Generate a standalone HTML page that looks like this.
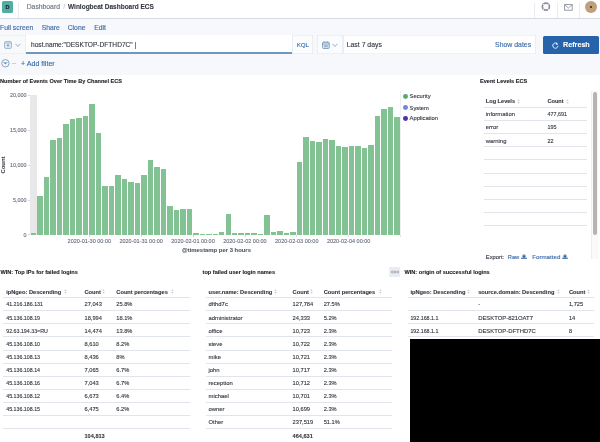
<!DOCTYPE html>
<html><head><meta charset="utf-8"><style>
html,body{margin:0;padding:0;}
body{width:600px;height:442px;position:relative;overflow:hidden;background:#fff;font-family:"Liberation Sans",sans-serif;}
.t{position:absolute;white-space:nowrap;line-height:1;}
.r{position:absolute;}
#w{position:absolute;left:0;top:0;width:600px;height:442px;will-change:transform;background:#fff;}
svg{display:block;}
</style></head><body><div id="w">
<div class="r" style="left:0.00px;top:17.60px;width:600.00px;height:0.90px;background:#d3dae6;"></div>
<div class="r" style="left:2.00px;top:1.10px;width:11.10px;height:11.60px;background:#50afa3;border-radius:1.5px;"></div>
<div class="t" style="left:5.40px;top:5px;font-size:5.6px;font-weight:700;color:#1a1c21;-webkit-text-stroke:0.1px currentColor;">D</div>
<div class="r" style="left:18.20px;top:2.80px;width:0.70px;height:14.80px;background:#e6e9ee;"></div>
<div class="t" style="left:26.70px;top:4px;font-size:6.8px;font-weight:400;color:#69707d;-webkit-text-stroke:0.12px currentColor;">Dashboard</div>
<div class="t" style="left:63.20px;top:4px;font-size:6.8px;font-weight:400;color:#c5c9d0;-webkit-text-stroke:0.12px currentColor;">/</div>
<div class="t" style="left:68.00px;top:4px;font-size:6.5px;font-weight:700;color:#343741;-webkit-text-stroke:0.1px currentColor;">Winlogbeat Dashboard ECS</div>
<div class="r" style="left:534.05px;top:2.80px;width:0.70px;height:14.80px;background:#e9ecf0;"></div>
<div class="r" style="left:557.35px;top:2.80px;width:0.70px;height:14.80px;background:#e9ecf0;"></div>
<div class="r" style="left:579.25px;top:2.80px;width:0.70px;height:14.80px;background:#e9ecf0;"></div>
<div class="r" style="left:0.00px;top:18.50px;width:600.00px;height:56.50px;background:#f6f8fb;"></div>
<div class="t" style="left:0.00px;top:25px;font-size:6.8px;font-weight:400;color:#3a69a8;-webkit-text-stroke:0.12px currentColor;">Full screen</div>
<div class="t" style="left:41.70px;top:25px;font-size:6.8px;font-weight:400;color:#3a69a8;-webkit-text-stroke:0.12px currentColor;">Share</div>
<div class="t" style="left:67.70px;top:25px;font-size:6.8px;font-weight:400;color:#3a69a8;-webkit-text-stroke:0.12px currentColor;">Clone</div>
<div class="t" style="left:94.30px;top:25px;font-size:6.8px;font-weight:400;color:#3a69a8;-webkit-text-stroke:0.12px currentColor;">Edit</div>
<div class="r" style="left:0.00px;top:35.20px;width:25.60px;height:18.50px;background:#f7f9fb;box-shadow:inset 0 0.6px 0 #e3e7ed, inset 0 -0.6px 0 #e3e7ed, inset -0.6px 0 0 #e3e7ed;"></div>
<div class="r" style="left:25.60px;top:35.40px;width:266.20px;height:18.30px;background:#fff;"></div>
<div class="r" style="left:25.60px;top:52.10px;width:266.20px;height:1.70px;background:#7097c4;"></div>
<div class="t" style="left:31.00px;top:42px;font-size:6.6px;font-weight:400;color:#343741;-webkit-text-stroke:0.12px currentColor;">host.name:&quot;DESKTOP-DFTHD7C&quot; |</div>
<div class="r" style="left:291.80px;top:35.40px;width:21.50px;height:18.30px;background:#fbfcfd;box-shadow:inset 0 0 0 0.6px #dfe5ef;"></div>
<div class="t" style="left:296.70px;top:42px;font-size:6.1px;font-weight:400;color:#3a69a8;-webkit-text-stroke:0.12px currentColor;">KQL</div>
<div class="r" style="left:317.00px;top:35.40px;width:25.60px;height:18.30px;background:#fbfcfd;box-shadow:inset 0 0 0 0.6px #dfe5ef;"></div>
<div class="r" style="left:342.60px;top:35.40px;width:193.00px;height:18.30px;background:#fff;box-shadow:inset 0 0 0 0.6px #dfe5ef;"></div>
<div class="t" style="left:346.70px;top:42px;font-size:6.9px;font-weight:400;color:#343741;-webkit-text-stroke:0.12px currentColor;">Last 7 days</div>
<div class="t" style="left:495.10px;top:42px;font-size:6.9px;font-weight:400;color:#3a69a8;-webkit-text-stroke:0.12px currentColor;">Show dates</div>
<div class="r" style="left:543.20px;top:35.50px;width:55.40px;height:18.10px;background:#2763ab;border-radius:1.5px;"></div>
<div class="t" style="left:563.00px;top:41px;font-size:7.2px;font-weight:700;color:#fff;-webkit-text-stroke:0.1px currentColor;">Refresh</div>
<div class="t" style="left:21.00px;top:61px;font-size:7.1px;font-weight:400;color:#3a69a8;-webkit-text-stroke:0.12px currentColor;">+ Add filter</div>
<div class="t" style="left:0.00px;top:79px;font-size:5.6px;font-weight:700;color:#1a1c21;-webkit-text-stroke:0.1px currentColor;">Number of Events Over Time By Channel ECS</div>
<div class="t" style="right:573.40px;top:93px;font-size:5.4px;font-weight:400;color:#69707d;-webkit-text-stroke:0.12px currentColor;">20,000</div>
<div class="r" style="left:28.30px;top:95.00px;width:1.50px;height:0.60px;background:#d3dae6;"></div>
<div class="t" style="right:573.40px;top:128px;font-size:5.4px;font-weight:400;color:#69707d;-webkit-text-stroke:0.12px currentColor;">15,000</div>
<div class="r" style="left:28.30px;top:129.90px;width:1.50px;height:0.60px;background:#d3dae6;"></div>
<div class="t" style="right:573.40px;top:163px;font-size:5.4px;font-weight:400;color:#69707d;-webkit-text-stroke:0.12px currentColor;">10,000</div>
<div class="r" style="left:28.30px;top:164.70px;width:1.50px;height:0.60px;background:#d3dae6;"></div>
<div class="t" style="right:573.40px;top:198px;font-size:5.4px;font-weight:400;color:#69707d;-webkit-text-stroke:0.12px currentColor;">5,000</div>
<div class="r" style="left:28.30px;top:199.60px;width:1.50px;height:0.60px;background:#d3dae6;"></div>
<div class="t" style="right:573.40px;top:233px;font-size:5.4px;font-weight:400;color:#69707d;-webkit-text-stroke:0.12px currentColor;">0</div>
<div class="r" style="left:28.30px;top:234.40px;width:1.50px;height:0.60px;background:#d3dae6;"></div>
<div class="r" style="left:30.00px;top:95.30px;width:7.00px;height:139.40px;background:#e8e8e8;"></div>
<div class="r" style="left:31.00px;top:232.90px;width:5.45px;height:1.80px;background:#82c293;"></div>
<div class="r" style="left:37.48px;top:195.90px;width:5.45px;height:38.80px;background:#82c293;"></div>
<div class="r" style="left:43.97px;top:176.90px;width:5.45px;height:57.80px;background:#82c293;"></div>
<div class="r" style="left:50.45px;top:139.70px;width:5.45px;height:95.00px;background:#82c293;"></div>
<div class="r" style="left:56.94px;top:138.00px;width:5.45px;height:96.70px;background:#82c293;"></div>
<div class="r" style="left:63.42px;top:124.30px;width:5.45px;height:110.40px;background:#82c293;"></div>
<div class="r" style="left:69.90px;top:119.00px;width:5.45px;height:115.70px;background:#82c293;"></div>
<div class="r" style="left:76.39px;top:118.00px;width:5.45px;height:116.70px;background:#82c293;"></div>
<div class="r" style="left:82.87px;top:115.50px;width:5.45px;height:119.20px;background:#82c293;"></div>
<div class="r" style="left:89.36px;top:103.90px;width:5.45px;height:130.80px;background:#82c293;"></div>
<div class="r" style="left:95.84px;top:132.80px;width:5.45px;height:101.90px;background:#82c293;"></div>
<div class="r" style="left:102.32px;top:186.20px;width:5.45px;height:48.50px;background:#82c293;"></div>
<div class="r" style="left:108.81px;top:186.20px;width:5.45px;height:48.50px;background:#82c293;"></div>
<div class="r" style="left:115.29px;top:174.70px;width:5.45px;height:60.00px;background:#82c293;"></div>
<div class="r" style="left:121.78px;top:179.10px;width:5.45px;height:55.60px;background:#82c293;"></div>
<div class="r" style="left:128.26px;top:182.00px;width:5.45px;height:52.70px;background:#82c293;"></div>
<div class="r" style="left:134.74px;top:182.80px;width:5.45px;height:51.90px;background:#82c293;"></div>
<div class="r" style="left:141.23px;top:174.80px;width:5.45px;height:59.90px;background:#82c293;"></div>
<div class="r" style="left:147.71px;top:159.60px;width:5.45px;height:75.10px;background:#82c293;"></div>
<div class="r" style="left:154.20px;top:166.70px;width:5.45px;height:68.00px;background:#82c293;"></div>
<div class="r" style="left:160.68px;top:168.70px;width:5.45px;height:66.00px;background:#82c293;"></div>
<div class="r" style="left:167.16px;top:205.90px;width:5.45px;height:28.80px;background:#82c293;"></div>
<div class="r" style="left:173.65px;top:210.00px;width:5.45px;height:24.70px;background:#82c293;"></div>
<div class="r" style="left:180.13px;top:208.80px;width:5.45px;height:25.90px;background:#82c293;"></div>
<div class="r" style="left:186.62px;top:209.10px;width:5.45px;height:25.60px;background:#82c293;"></div>
<div class="r" style="left:193.10px;top:232.90px;width:5.45px;height:1.80px;background:#82c293;"></div>
<div class="r" style="left:199.58px;top:233.90px;width:5.45px;height:0.80px;background:#82c293;"></div>
<div class="r" style="left:206.07px;top:233.90px;width:5.45px;height:0.80px;background:#82c293;"></div>
<div class="r" style="left:212.55px;top:233.80px;width:5.45px;height:0.90px;background:#82c293;"></div>
<div class="r" style="left:219.04px;top:231.70px;width:5.45px;height:3.00px;background:#82c293;"></div>
<div class="r" style="left:225.52px;top:213.70px;width:5.45px;height:21.00px;background:#82c293;"></div>
<div class="r" style="left:232.00px;top:232.90px;width:5.45px;height:1.80px;background:#82c293;"></div>
<div class="r" style="left:238.49px;top:232.90px;width:5.45px;height:1.80px;background:#82c293;"></div>
<div class="r" style="left:244.97px;top:232.60px;width:5.45px;height:2.10px;background:#82c293;"></div>
<div class="r" style="left:251.46px;top:232.60px;width:5.45px;height:2.10px;background:#82c293;"></div>
<div class="r" style="left:257.94px;top:233.80px;width:5.45px;height:0.90px;background:#82c293;"></div>
<div class="r" style="left:264.42px;top:214.70px;width:5.45px;height:20.00px;background:#82c293;"></div>
<div class="r" style="left:270.91px;top:231.90px;width:5.45px;height:2.80px;background:#82c293;"></div>
<div class="r" style="left:277.39px;top:230.50px;width:5.45px;height:4.20px;background:#82c293;"></div>
<div class="r" style="left:283.88px;top:232.60px;width:5.45px;height:2.10px;background:#82c293;"></div>
<div class="r" style="left:290.36px;top:231.60px;width:5.45px;height:3.10px;background:#82c293;"></div>
<div class="r" style="left:296.84px;top:161.60px;width:5.45px;height:73.10px;background:#82c293;"></div>
<div class="r" style="left:303.33px;top:137.00px;width:5.45px;height:97.70px;background:#82c293;"></div>
<div class="r" style="left:309.81px;top:140.90px;width:5.45px;height:93.80px;background:#82c293;"></div>
<div class="r" style="left:316.30px;top:141.80px;width:5.45px;height:92.90px;background:#82c293;"></div>
<div class="r" style="left:322.78px;top:139.60px;width:5.45px;height:95.10px;background:#82c293;"></div>
<div class="r" style="left:322.78px;top:138.80px;width:5.45px;height:1.00px;background:#8fa6c8;"></div>
<div class="r" style="left:329.26px;top:140.30px;width:5.45px;height:94.40px;background:#82c293;"></div>
<div class="r" style="left:335.75px;top:146.20px;width:5.45px;height:88.50px;background:#82c293;"></div>
<div class="r" style="left:342.23px;top:147.00px;width:5.45px;height:87.70px;background:#82c293;"></div>
<div class="r" style="left:348.72px;top:146.00px;width:5.45px;height:88.70px;background:#82c293;"></div>
<div class="r" style="left:355.20px;top:146.00px;width:5.45px;height:88.70px;background:#82c293;"></div>
<div class="r" style="left:361.68px;top:147.90px;width:5.45px;height:86.80px;background:#82c293;"></div>
<div class="r" style="left:368.17px;top:145.30px;width:5.45px;height:89.40px;background:#82c293;"></div>
<div class="r" style="left:374.65px;top:115.80px;width:5.45px;height:118.90px;background:#82c293;"></div>
<div class="r" style="left:381.14px;top:109.00px;width:5.45px;height:125.70px;background:#82c293;"></div>
<div class="r" style="left:387.62px;top:106.60px;width:5.45px;height:128.10px;background:#82c293;"></div>
<div class="r" style="left:394.10px;top:116.70px;width:5.45px;height:118.00px;background:#82c293;"></div>
<div class="r" style="left:89.00px;top:234.80px;width:0.60px;height:2.70px;background:#d3dae6;"></div>
<div class="t" style="left:89.30px;transform:translateX(-50%);top:239px;font-size:5.5px;font-weight:400;color:#69707d;-webkit-text-stroke:0.12px currentColor;">2020-01-30 00:00</div>
<div class="r" style="left:140.87px;top:234.80px;width:0.60px;height:2.70px;background:#d3dae6;"></div>
<div class="t" style="left:141.17px;transform:translateX(-50%);top:239px;font-size:5.5px;font-weight:400;color:#69707d;-webkit-text-stroke:0.12px currentColor;">2020-01-31 00:00</div>
<div class="r" style="left:192.74px;top:234.80px;width:0.60px;height:2.70px;background:#d3dae6;"></div>
<div class="t" style="left:193.04px;transform:translateX(-50%);top:239px;font-size:5.5px;font-weight:400;color:#69707d;-webkit-text-stroke:0.12px currentColor;">2020-02-01 00:00</div>
<div class="r" style="left:244.61px;top:234.80px;width:0.60px;height:2.70px;background:#d3dae6;"></div>
<div class="t" style="left:244.91px;transform:translateX(-50%);top:239px;font-size:5.5px;font-weight:400;color:#69707d;-webkit-text-stroke:0.12px currentColor;">2020-02-02 00:00</div>
<div class="r" style="left:296.48px;top:234.80px;width:0.60px;height:2.70px;background:#d3dae6;"></div>
<div class="t" style="left:296.78px;transform:translateX(-50%);top:239px;font-size:5.5px;font-weight:400;color:#69707d;-webkit-text-stroke:0.12px currentColor;">2020-02-03 00:00</div>
<div class="r" style="left:348.35px;top:234.80px;width:0.60px;height:2.70px;background:#d3dae6;"></div>
<div class="t" style="left:348.65px;transform:translateX(-50%);top:239px;font-size:5.5px;font-weight:400;color:#69707d;-webkit-text-stroke:0.12px currentColor;">2020-02-04 00:00</div>
<div class="r" style="left:400.10px;top:234.80px;width:0.60px;height:2.70px;background:#d3dae6;"></div>
<div class="t" style="left:182.00px;top:248px;font-size:5.9px;font-weight:700;color:#535966;-webkit-text-stroke:0.1px currentColor;">@timestamp per 3 hours</div>
<div class="t" style="left:4.0px;top:165.2px;font-size:5.9px;font-weight:700;color:#343741;transform:translate(-50%,-50%) rotate(-90deg);">Count</div>
<div class="r" style="left:400.30px;top:91.00px;width:0.60px;height:145.00px;background:#eef0f3;"></div>
<div class="r" style="left:402.80px;top:93.80px;width:4.8px;height:4.8px;border-radius:50%;background:#55ad6c;"></div>
<div class="t" style="left:409.60px;top:94px;font-size:5.8px;font-weight:400;color:#343741;-webkit-text-stroke:0.12px currentColor;">Security</div>
<div class="r" style="left:402.80px;top:105.20px;width:4.8px;height:4.8px;border-radius:50%;background:#6f87d8;"></div>
<div class="t" style="left:409.60px;top:106px;font-size:5.8px;font-weight:400;color:#343741;-webkit-text-stroke:0.12px currentColor;">System</div>
<div class="r" style="left:402.80px;top:116.20px;width:4.8px;height:4.8px;border-radius:50%;background:#4f2fae;"></div>
<div class="t" style="left:409.60px;top:116px;font-size:5.8px;font-weight:400;color:#343741;-webkit-text-stroke:0.12px currentColor;">Application</div>
<div class="t" style="left:480.00px;top:79px;font-size:5.6px;font-weight:700;color:#1a1c21;-webkit-text-stroke:0.1px currentColor;">Event Levels ECS</div>
<div class="t" style="left:485.80px;top:99px;font-size:5.6px;font-weight:700;color:#343741;-webkit-text-stroke:0.1px currentColor;">Log Levels</div>
<div class="t" style="left:547.50px;top:99px;font-size:5.6px;font-weight:700;color:#343741;-webkit-text-stroke:0.1px currentColor;">Count</div>
<div class="r" style="left:484.20px;top:106.80px;width:103.20px;height:0.60px;background:#e1e5eb;"></div>
<div class="r" style="left:484.20px;top:119.97px;width:103.20px;height:0.60px;background:#e1e5eb;"></div>
<div class="r" style="left:484.20px;top:133.14px;width:103.20px;height:0.60px;background:#e1e5eb;"></div>
<div class="r" style="left:484.20px;top:146.31px;width:103.20px;height:0.60px;background:#e1e5eb;"></div>
<div class="r" style="left:484.20px;top:159.48px;width:103.20px;height:0.60px;background:#e1e5eb;"></div>
<div class="r" style="left:484.20px;top:172.65px;width:103.20px;height:0.60px;background:#e1e5eb;"></div>
<div class="r" style="left:484.20px;top:185.82px;width:103.20px;height:0.60px;background:#e1e5eb;"></div>
<div class="r" style="left:484.20px;top:198.99px;width:103.20px;height:0.60px;background:#e1e5eb;"></div>
<div class="r" style="left:484.20px;top:212.16px;width:103.20px;height:0.60px;background:#e1e5eb;"></div>
<div class="r" style="left:484.20px;top:225.33px;width:103.20px;height:0.60px;background:#e1e5eb;"></div>
<div class="t" style="left:485.80px;top:112px;font-size:5.9px;font-weight:400;color:#343741;-webkit-text-stroke:0.12px currentColor;">information</div>
<div class="t" style="left:547.50px;top:112px;font-size:5.4px;font-weight:400;color:#343741;-webkit-text-stroke:0.12px currentColor;">477,691</div>
<div class="t" style="left:485.80px;top:125px;font-size:5.9px;font-weight:400;color:#343741;-webkit-text-stroke:0.12px currentColor;">error</div>
<div class="t" style="left:547.50px;top:125px;font-size:5.4px;font-weight:400;color:#343741;-webkit-text-stroke:0.12px currentColor;">195</div>
<div class="t" style="left:485.80px;top:139px;font-size:5.9px;font-weight:400;color:#343741;-webkit-text-stroke:0.12px currentColor;">warning</div>
<div class="t" style="left:547.50px;top:139px;font-size:5.4px;font-weight:400;color:#343741;-webkit-text-stroke:0.12px currentColor;">22</div>
<div class="r" style="left:591.30px;top:90.90px;width:6.60px;height:168.10px;background:#fafafa;box-shadow:inset 0.6px 0 0 #e6e6e6, inset -0.4px 0 0 #efefef;"></div>
<div class="r" style="left:593.10px;top:91.90px;width:3.80px;height:143.60px;background:#b4b4b4;border-radius:1.9px;"></div>
<div class="t" style="left:485.80px;top:255px;font-size:5.8px;font-weight:400;color:#343741;-webkit-text-stroke:0.12px currentColor;">Export:</div>
<div class="t" style="left:507.80px;top:255px;font-size:5.7px;font-weight:400;color:#3a69a8;-webkit-text-stroke:0.12px currentColor;">Raw</div>
<div class="t" style="left:532.20px;top:254px;font-size:6.2px;font-weight:400;color:#3a69a8;-webkit-text-stroke:0.12px currentColor;">Formatted</div>
<div class="t" style="left:0.50px;top:270px;font-size:5.6px;font-weight:700;color:#1a1c21;-webkit-text-stroke:0.1px currentColor;">WIN: Top IPs for failed logins</div>
<div class="t" style="left:6.20px;top:290px;font-size:5.7px;font-weight:700;color:#343741;-webkit-text-stroke:0.1px currentColor;">ipNgeo: Descending</div>
<div class="t" style="left:84.50px;top:290px;font-size:5.7px;font-weight:700;color:#343741;-webkit-text-stroke:0.1px currentColor;">Count</div>
<div class="t" style="left:116.30px;top:290px;font-size:5.7px;font-weight:700;color:#343741;-webkit-text-stroke:0.1px currentColor;">Count percentages</div>
<div class="r" style="left:3.30px;top:297.10px;width:186.80px;height:0.60px;background:#e1e5eb;"></div>
<div class="r" style="left:3.30px;top:310.20px;width:186.80px;height:0.60px;background:#e1e5eb;"></div>
<div class="r" style="left:3.30px;top:323.30px;width:186.80px;height:0.60px;background:#e1e5eb;"></div>
<div class="r" style="left:3.30px;top:336.40px;width:186.80px;height:0.60px;background:#e1e5eb;"></div>
<div class="r" style="left:3.30px;top:349.50px;width:186.80px;height:0.60px;background:#e1e5eb;"></div>
<div class="r" style="left:3.30px;top:362.60px;width:186.80px;height:0.60px;background:#e1e5eb;"></div>
<div class="r" style="left:3.30px;top:375.70px;width:186.80px;height:0.60px;background:#e1e5eb;"></div>
<div class="r" style="left:3.30px;top:388.80px;width:186.80px;height:0.60px;background:#e1e5eb;"></div>
<div class="r" style="left:3.30px;top:401.90px;width:186.80px;height:0.60px;background:#e1e5eb;"></div>
<div class="r" style="left:3.30px;top:415.00px;width:186.80px;height:0.60px;background:#e1e5eb;"></div>
<div class="r" style="left:3.30px;top:428.10px;width:186.80px;height:0.60px;background:#e1e5eb;"></div>
<div class="t" style="left:6.20px;top:302px;font-size:5.3px;font-weight:400;color:#343741;-webkit-text-stroke:0.12px currentColor;">41.216.186.131</div>
<div class="t" style="left:84.50px;top:302px;font-size:5.7px;font-weight:400;color:#343741;-webkit-text-stroke:0.12px currentColor;">27,043</div>
<div class="t" style="left:116.30px;top:302px;font-size:5.7px;font-weight:400;color:#343741;-webkit-text-stroke:0.12px currentColor;">25.8%</div>
<div class="t" style="left:6.20px;top:316px;font-size:5.3px;font-weight:400;color:#343741;-webkit-text-stroke:0.12px currentColor;">45.136.108.19</div>
<div class="t" style="left:84.50px;top:316px;font-size:5.7px;font-weight:400;color:#343741;-webkit-text-stroke:0.12px currentColor;">18,994</div>
<div class="t" style="left:116.30px;top:316px;font-size:5.7px;font-weight:400;color:#343741;-webkit-text-stroke:0.12px currentColor;">18.1%</div>
<div class="t" style="left:6.20px;top:329px;font-size:5.3px;font-weight:400;color:#343741;-webkit-text-stroke:0.12px currentColor;">92.63.194.33=RU</div>
<div class="t" style="left:84.50px;top:329px;font-size:5.7px;font-weight:400;color:#343741;-webkit-text-stroke:0.12px currentColor;">14,474</div>
<div class="t" style="left:116.30px;top:329px;font-size:5.7px;font-weight:400;color:#343741;-webkit-text-stroke:0.12px currentColor;">13.8%</div>
<div class="t" style="left:6.20px;top:342px;font-size:5.3px;font-weight:400;color:#343741;-webkit-text-stroke:0.12px currentColor;">45.136.108.10</div>
<div class="t" style="left:84.50px;top:342px;font-size:5.7px;font-weight:400;color:#343741;-webkit-text-stroke:0.12px currentColor;">8,610</div>
<div class="t" style="left:116.30px;top:342px;font-size:5.7px;font-weight:400;color:#343741;-webkit-text-stroke:0.12px currentColor;">8.2%</div>
<div class="t" style="left:6.20px;top:355px;font-size:5.3px;font-weight:400;color:#343741;-webkit-text-stroke:0.12px currentColor;">45.136.108.13</div>
<div class="t" style="left:84.50px;top:355px;font-size:5.7px;font-weight:400;color:#343741;-webkit-text-stroke:0.12px currentColor;">8,436</div>
<div class="t" style="left:116.30px;top:355px;font-size:5.7px;font-weight:400;color:#343741;-webkit-text-stroke:0.12px currentColor;">8%</div>
<div class="t" style="left:6.20px;top:368px;font-size:5.3px;font-weight:400;color:#343741;-webkit-text-stroke:0.12px currentColor;">45.136.108.14</div>
<div class="t" style="left:84.50px;top:368px;font-size:5.7px;font-weight:400;color:#343741;-webkit-text-stroke:0.12px currentColor;">7,065</div>
<div class="t" style="left:116.30px;top:368px;font-size:5.7px;font-weight:400;color:#343741;-webkit-text-stroke:0.12px currentColor;">6.7%</div>
<div class="t" style="left:6.20px;top:381px;font-size:5.3px;font-weight:400;color:#343741;-webkit-text-stroke:0.12px currentColor;">45.136.108.16</div>
<div class="t" style="left:84.50px;top:381px;font-size:5.7px;font-weight:400;color:#343741;-webkit-text-stroke:0.12px currentColor;">7,043</div>
<div class="t" style="left:116.30px;top:381px;font-size:5.7px;font-weight:400;color:#343741;-webkit-text-stroke:0.12px currentColor;">6.7%</div>
<div class="t" style="left:6.20px;top:394px;font-size:5.3px;font-weight:400;color:#343741;-webkit-text-stroke:0.12px currentColor;">45.136.108.12</div>
<div class="t" style="left:84.50px;top:394px;font-size:5.7px;font-weight:400;color:#343741;-webkit-text-stroke:0.12px currentColor;">6,673</div>
<div class="t" style="left:116.30px;top:394px;font-size:5.7px;font-weight:400;color:#343741;-webkit-text-stroke:0.12px currentColor;">6.4%</div>
<div class="t" style="left:6.20px;top:407px;font-size:5.3px;font-weight:400;color:#343741;-webkit-text-stroke:0.12px currentColor;">45.136.108.15</div>
<div class="t" style="left:84.50px;top:407px;font-size:5.7px;font-weight:400;color:#343741;-webkit-text-stroke:0.12px currentColor;">6,475</div>
<div class="t" style="left:116.30px;top:407px;font-size:5.7px;font-weight:400;color:#343741;-webkit-text-stroke:0.12px currentColor;">6.2%</div>
<div class="t" style="left:84.50px;top:434px;font-size:5.6px;font-weight:700;color:#343741;-webkit-text-stroke:0.1px currentColor;">104,813</div>
<div class="t" style="left:202.60px;top:270px;font-size:5.6px;font-weight:700;color:#1a1c21;-webkit-text-stroke:0.1px currentColor;">top failed user login names</div>
<div class="t" style="left:208.50px;top:290px;font-size:5.7px;font-weight:700;color:#343741;-webkit-text-stroke:0.1px currentColor;">user.name: Descending</div>
<div class="t" style="left:292.60px;top:290px;font-size:5.7px;font-weight:700;color:#343741;-webkit-text-stroke:0.1px currentColor;">Count</div>
<div class="t" style="left:323.70px;top:290px;font-size:5.7px;font-weight:700;color:#343741;-webkit-text-stroke:0.1px currentColor;">Count percentages</div>
<div class="r" style="left:206.00px;top:297.10px;width:186.30px;height:0.60px;background:#e1e5eb;"></div>
<div class="r" style="left:206.00px;top:310.20px;width:186.30px;height:0.60px;background:#e1e5eb;"></div>
<div class="r" style="left:206.00px;top:323.30px;width:186.30px;height:0.60px;background:#e1e5eb;"></div>
<div class="r" style="left:206.00px;top:336.40px;width:186.30px;height:0.60px;background:#e1e5eb;"></div>
<div class="r" style="left:206.00px;top:349.50px;width:186.30px;height:0.60px;background:#e1e5eb;"></div>
<div class="r" style="left:206.00px;top:362.60px;width:186.30px;height:0.60px;background:#e1e5eb;"></div>
<div class="r" style="left:206.00px;top:375.70px;width:186.30px;height:0.60px;background:#e1e5eb;"></div>
<div class="r" style="left:206.00px;top:388.80px;width:186.30px;height:0.60px;background:#e1e5eb;"></div>
<div class="r" style="left:206.00px;top:401.90px;width:186.30px;height:0.60px;background:#e1e5eb;"></div>
<div class="r" style="left:206.00px;top:415.00px;width:186.30px;height:0.60px;background:#e1e5eb;"></div>
<div class="r" style="left:206.00px;top:428.10px;width:186.30px;height:0.60px;background:#e1e5eb;"></div>
<div class="t" style="left:208.50px;top:302px;font-size:5.9px;font-weight:400;color:#343741;-webkit-text-stroke:0.12px currentColor;">dfthd7c</div>
<div class="t" style="left:292.60px;top:302px;font-size:5.7px;font-weight:400;color:#343741;-webkit-text-stroke:0.12px currentColor;">127,784</div>
<div class="t" style="left:323.70px;top:302px;font-size:5.7px;font-weight:400;color:#343741;-webkit-text-stroke:0.12px currentColor;">27.5%</div>
<div class="t" style="left:208.50px;top:316px;font-size:5.9px;font-weight:400;color:#343741;-webkit-text-stroke:0.12px currentColor;">administrator</div>
<div class="t" style="left:292.60px;top:316px;font-size:5.7px;font-weight:400;color:#343741;-webkit-text-stroke:0.12px currentColor;">24,333</div>
<div class="t" style="left:323.70px;top:316px;font-size:5.7px;font-weight:400;color:#343741;-webkit-text-stroke:0.12px currentColor;">5.2%</div>
<div class="t" style="left:208.50px;top:329px;font-size:5.9px;font-weight:400;color:#343741;-webkit-text-stroke:0.12px currentColor;">office</div>
<div class="t" style="left:292.60px;top:329px;font-size:5.7px;font-weight:400;color:#343741;-webkit-text-stroke:0.12px currentColor;">10,723</div>
<div class="t" style="left:323.70px;top:329px;font-size:5.7px;font-weight:400;color:#343741;-webkit-text-stroke:0.12px currentColor;">2.3%</div>
<div class="t" style="left:208.50px;top:342px;font-size:5.9px;font-weight:400;color:#343741;-webkit-text-stroke:0.12px currentColor;">steve</div>
<div class="t" style="left:292.60px;top:342px;font-size:5.7px;font-weight:400;color:#343741;-webkit-text-stroke:0.12px currentColor;">10,722</div>
<div class="t" style="left:323.70px;top:342px;font-size:5.7px;font-weight:400;color:#343741;-webkit-text-stroke:0.12px currentColor;">2.3%</div>
<div class="t" style="left:208.50px;top:355px;font-size:5.9px;font-weight:400;color:#343741;-webkit-text-stroke:0.12px currentColor;">mike</div>
<div class="t" style="left:292.60px;top:355px;font-size:5.7px;font-weight:400;color:#343741;-webkit-text-stroke:0.12px currentColor;">10,721</div>
<div class="t" style="left:323.70px;top:355px;font-size:5.7px;font-weight:400;color:#343741;-webkit-text-stroke:0.12px currentColor;">2.3%</div>
<div class="t" style="left:208.50px;top:368px;font-size:5.9px;font-weight:400;color:#343741;-webkit-text-stroke:0.12px currentColor;">john</div>
<div class="t" style="left:292.60px;top:368px;font-size:5.7px;font-weight:400;color:#343741;-webkit-text-stroke:0.12px currentColor;">10,717</div>
<div class="t" style="left:323.70px;top:368px;font-size:5.7px;font-weight:400;color:#343741;-webkit-text-stroke:0.12px currentColor;">2.3%</div>
<div class="t" style="left:208.50px;top:381px;font-size:5.9px;font-weight:400;color:#343741;-webkit-text-stroke:0.12px currentColor;">reception</div>
<div class="t" style="left:292.60px;top:381px;font-size:5.7px;font-weight:400;color:#343741;-webkit-text-stroke:0.12px currentColor;">10,712</div>
<div class="t" style="left:323.70px;top:381px;font-size:5.7px;font-weight:400;color:#343741;-webkit-text-stroke:0.12px currentColor;">2.3%</div>
<div class="t" style="left:208.50px;top:394px;font-size:5.9px;font-weight:400;color:#343741;-webkit-text-stroke:0.12px currentColor;">michael</div>
<div class="t" style="left:292.60px;top:394px;font-size:5.7px;font-weight:400;color:#343741;-webkit-text-stroke:0.12px currentColor;">10,701</div>
<div class="t" style="left:323.70px;top:394px;font-size:5.7px;font-weight:400;color:#343741;-webkit-text-stroke:0.12px currentColor;">2.3%</div>
<div class="t" style="left:208.50px;top:407px;font-size:5.9px;font-weight:400;color:#343741;-webkit-text-stroke:0.12px currentColor;">owner</div>
<div class="t" style="left:292.60px;top:407px;font-size:5.7px;font-weight:400;color:#343741;-webkit-text-stroke:0.12px currentColor;">10,699</div>
<div class="t" style="left:323.70px;top:407px;font-size:5.7px;font-weight:400;color:#343741;-webkit-text-stroke:0.12px currentColor;">2.3%</div>
<div class="t" style="left:208.50px;top:420px;font-size:5.9px;font-weight:400;color:#343741;-webkit-text-stroke:0.12px currentColor;">Other</div>
<div class="t" style="left:292.60px;top:420px;font-size:5.7px;font-weight:400;color:#343741;-webkit-text-stroke:0.12px currentColor;">237,519</div>
<div class="t" style="left:323.70px;top:420px;font-size:5.7px;font-weight:400;color:#343741;-webkit-text-stroke:0.12px currentColor;">51.1%</div>
<div class="t" style="left:292.60px;top:434px;font-size:5.6px;font-weight:700;color:#343741;-webkit-text-stroke:0.1px currentColor;">464,631</div>
<div class="t" style="left:404.50px;top:270px;font-size:5.6px;font-weight:700;color:#1a1c21;-webkit-text-stroke:0.1px currentColor;">WIN: origin of successful logins</div>
<div class="t" style="left:410.40px;top:290px;font-size:5.7px;font-weight:700;color:#343741;-webkit-text-stroke:0.1px currentColor;">ipNgeo: Descending</div>
<div class="t" style="left:478.20px;top:290px;font-size:5.7px;font-weight:700;color:#343741;-webkit-text-stroke:0.1px currentColor;">source.domain: Descending</div>
<div class="t" style="left:568.90px;top:290px;font-size:5.7px;font-weight:700;color:#343741;-webkit-text-stroke:0.1px currentColor;">Count</div>
<div class="r" style="left:408.00px;top:297.10px;width:186.20px;height:0.60px;background:#e1e5eb;"></div>
<div class="r" style="left:408.00px;top:310.20px;width:186.20px;height:0.60px;background:#e1e5eb;"></div>
<div class="r" style="left:408.00px;top:323.30px;width:186.20px;height:0.60px;background:#e1e5eb;"></div>
<div class="r" style="left:408.00px;top:336.40px;width:186.20px;height:0.60px;background:#e1e5eb;"></div>
<div class="t" style="left:478.20px;top:302px;font-size:5.7px;font-weight:400;color:#343741;-webkit-text-stroke:0.12px currentColor;">-</div>
<div class="t" style="left:568.90px;top:302px;font-size:5.7px;font-weight:400;color:#343741;-webkit-text-stroke:0.12px currentColor;">1,725</div>
<div class="t" style="left:410.40px;top:316px;font-size:5.3px;font-weight:400;color:#343741;-webkit-text-stroke:0.12px currentColor;">192.168.1.1</div>
<div class="t" style="left:478.20px;top:316px;font-size:5.9px;font-weight:400;color:#343741;-webkit-text-stroke:0.12px currentColor;">DESKTOP-821OAT7</div>
<div class="t" style="left:568.90px;top:316px;font-size:5.7px;font-weight:400;color:#343741;-webkit-text-stroke:0.12px currentColor;">14</div>
<div class="t" style="left:410.40px;top:329px;font-size:5.3px;font-weight:400;color:#343741;-webkit-text-stroke:0.12px currentColor;">192.168.1.1</div>
<div class="t" style="left:478.20px;top:329px;font-size:5.9px;font-weight:400;color:#343741;-webkit-text-stroke:0.12px currentColor;">DESKTOP-DFTHD7C</div>
<div class="t" style="left:568.90px;top:329px;font-size:5.7px;font-weight:400;color:#343741;-webkit-text-stroke:0.12px currentColor;">8</div>
<div class="r" style="left:389.00px;top:266.70px;width:11.00px;height:10.30px;background:#e9edf3;border-radius:1px;"></div>
<div class="r" style="left:410.10px;top:339.00px;width:189.90px;height:103.00px;background:#000;"></div>
<svg style="position:absolute;left:541px;top:2px;" width="10" height="10" viewBox="0 0 10 10"><circle cx="4.9" cy="4.7" r="3.5" fill="none" stroke="#8b909a" stroke-width="1.7"/><path d="M1.9 1.7 L3.6 3.4 M7.9 1.7 L6.2 3.4 M1.9 7.7 L3.6 6.0 M7.9 7.7 L6.2 6.0" stroke="#fff" stroke-width="1.0"/></svg>
<svg style="position:absolute;left:563.8px;top:3.5px;" width="9" height="7" viewBox="0 0 9 7"><rect x="0.6" y="0.6" width="7.6" height="5.6" fill="none" stroke="#8b909a" stroke-width="0.9"/><path d="M0.8 1 L4.4 4 L8 1" fill="none" stroke="#8b909a" stroke-width="0.8"/></svg>
<div class="r" style="left:585px;top:0.8px;width:11.8px;height:11.8px;border-radius:50%;background:#c0a07a;"></div>
<div class="r" style="left:589.9px;top:5.7px;width:2.2px;height:2.2px;border-radius:50%;background:#2a2420;"></div>
<svg style="position:absolute;left:4px;top:41.3px;" width="8" height="8" viewBox="0 0 8 8"><rect x="0.6" y="0.6" width="6.8" height="6.8" rx="1" fill="#e3ebf3" stroke="#94aec9" stroke-width="0.9"/><rect x="3" y="3.5" width="2" height="1.8" fill="#7f9cbc"/><path d="M1.8 0.8 V2.2 H6.2 V0.8" fill="none" stroke="#94aec9" stroke-width="0.6"/></svg>
<svg style="position:absolute;left:14.6px;top:43px;" width="6" height="4.5" viewBox="0 0 6 4.5"><path d="M0.4 0.8 L2.9 3.4 L5.4 0.8" fill="none" stroke="#7a9cc0" stroke-width="0.8"/></svg>
<svg style="position:absolute;left:321.5px;top:40.8px;" width="8" height="8" viewBox="0 0 8 8"><rect x="0.6" y="1.2" width="6.6" height="6.2" rx="0.8" fill="#e6eef6" stroke="#7a9cc0" stroke-width="1"/><path d="M0.8 3 H7" stroke="#7a9cc0" stroke-width="0.8"/><path d="M2.3 0.3 V1.8 M5.5 0.3 V1.8" stroke="#7a9cc0" stroke-width="0.8"/><rect x="2" y="4" width="3.8" height="2.3" fill="#9fb8d3"/></svg>
<svg style="position:absolute;left:332.4px;top:43px;" width="6" height="4.5" viewBox="0 0 6 4.5"><path d="M0.4 0.8 L2.9 3.4 L5.4 0.8" fill="none" stroke="#7a9cc0" stroke-width="0.8"/></svg>
<svg style="position:absolute;left:551.8px;top:41.8px;" width="7" height="7" viewBox="0 0 7 7"><path d="M5.6 2.2 A2.6 2.6 0 1 0 6 3.8" fill="none" stroke="#fff" stroke-width="0.9"/><path d="M4.2 0.4 L6 2.3 L3.8 2.7 Z" fill="#fff"/></svg>
<svg style="position:absolute;left:0.8px;top:58.8px;" width="9" height="9" viewBox="0 0 9 9"><circle cx="4.4" cy="4.3" r="3.7" fill="none" stroke="#7a9cc0" stroke-width="0.9"/><path d="M1.9 3.2 H6.9 L4.4 5.6 Z" fill="#7a9cc0"/></svg>
<div class="r" style="left:12.00px;top:63.30px;width:4.30px;height:0.60px;background:#c8d0dc;"></div>
<svg style="position:absolute;left:517px;top:98.8px;" width="3" height="5" viewBox="0 0 3 5"><path d="M1.5 0.3 L2.7 1.9 H0.3 Z M1.5 4.7 L2.7 3.1 H0.3 Z" fill="#c5cad3"/></svg>
<svg style="position:absolute;left:565.5px;top:98.8px;" width="3" height="5" viewBox="0 0 3 5"><path d="M1.5 0.3 L2.7 1.9 H0.3 Z M1.5 4.7 L2.7 3.1 H0.3 Z" fill="#c5cad3"/></svg>
<svg style="position:absolute;left:63.5px;top:289px;" width="3" height="5" viewBox="0 0 3 5"><path d="M1.5 0.3 L2.7 1.9 H0.3 Z M1.5 4.7 L2.7 3.1 H0.3 Z" fill="#c5cad3"/></svg>
<svg style="position:absolute;left:101.8px;top:289px;" width="3" height="5" viewBox="0 0 3 5"><path d="M1.5 0.3 L2.7 1.9 H0.3 Z M1.5 4.7 L2.7 3.1 H0.3 Z" fill="#c5cad3"/></svg>
<svg style="position:absolute;left:170.6px;top:289px;" width="3" height="5" viewBox="0 0 3 5"><path d="M1.5 0.3 L2.7 1.9 H0.3 Z M1.5 4.7 L2.7 3.1 H0.3 Z" fill="#c5cad3"/></svg>
<svg style="position:absolute;left:273.8px;top:289px;" width="3" height="5" viewBox="0 0 3 5"><path d="M1.5 0.3 L2.7 1.9 H0.3 Z M1.5 4.7 L2.7 3.1 H0.3 Z" fill="#c5cad3"/></svg>
<svg style="position:absolute;left:310.3px;top:289px;" width="3" height="5" viewBox="0 0 3 5"><path d="M1.5 0.3 L2.7 1.9 H0.3 Z M1.5 4.7 L2.7 3.1 H0.3 Z" fill="#c5cad3"/></svg>
<svg style="position:absolute;left:378.7px;top:289px;" width="3" height="5" viewBox="0 0 3 5"><path d="M1.5 0.3 L2.7 1.9 H0.3 Z M1.5 4.7 L2.7 3.1 H0.3 Z" fill="#c5cad3"/></svg>
<svg style="position:absolute;left:467px;top:289px;" width="3" height="5" viewBox="0 0 3 5"><path d="M1.5 0.3 L2.7 1.9 H0.3 Z M1.5 4.7 L2.7 3.1 H0.3 Z" fill="#c5cad3"/></svg>
<svg style="position:absolute;left:556.5px;top:289px;" width="3" height="5" viewBox="0 0 3 5"><path d="M1.5 0.3 L2.7 1.9 H0.3 Z M1.5 4.7 L2.7 3.1 H0.3 Z" fill="#c5cad3"/></svg>
<svg style="position:absolute;left:587.2px;top:289px;" width="3" height="5" viewBox="0 0 3 5"><path d="M1.5 0.3 L2.7 1.9 H0.3 Z M1.5 4.7 L2.7 3.1 H0.3 Z" fill="#c5cad3"/></svg>
<svg style="position:absolute;left:520.8px;top:253.8px;" width="6" height="5" viewBox="0 0 6 5"><path d="M3 0.2 V3 M1.4 1.6 L3 3.2 L4.6 1.6" fill="none" stroke="#2f63a6" stroke-width="1.1"/><rect x="0.2" y="3.6" width="5.6" height="1.2" fill="#2f63a6"/></svg>
<svg style="position:absolute;left:562px;top:253.8px;" width="6" height="5" viewBox="0 0 6 5"><path d="M3 0.2 V3 M1.4 1.6 L3 3.2 L4.6 1.6" fill="none" stroke="#2f63a6" stroke-width="1.1"/><rect x="0.2" y="3.6" width="5.6" height="1.2" fill="#2f63a6"/></svg>
<svg style="position:absolute;left:390.5px;top:269.8px;" width="8" height="4" viewBox="0 0 8 4"><circle cx="1.3" cy="2" r="1" fill="none" stroke="#69707d" stroke-width="0.5"/><circle cx="4" cy="2" r="1" fill="none" stroke="#69707d" stroke-width="0.5"/><circle cx="6.7" cy="2" r="1" fill="none" stroke="#69707d" stroke-width="0.5"/></svg>
</div></body></html>
